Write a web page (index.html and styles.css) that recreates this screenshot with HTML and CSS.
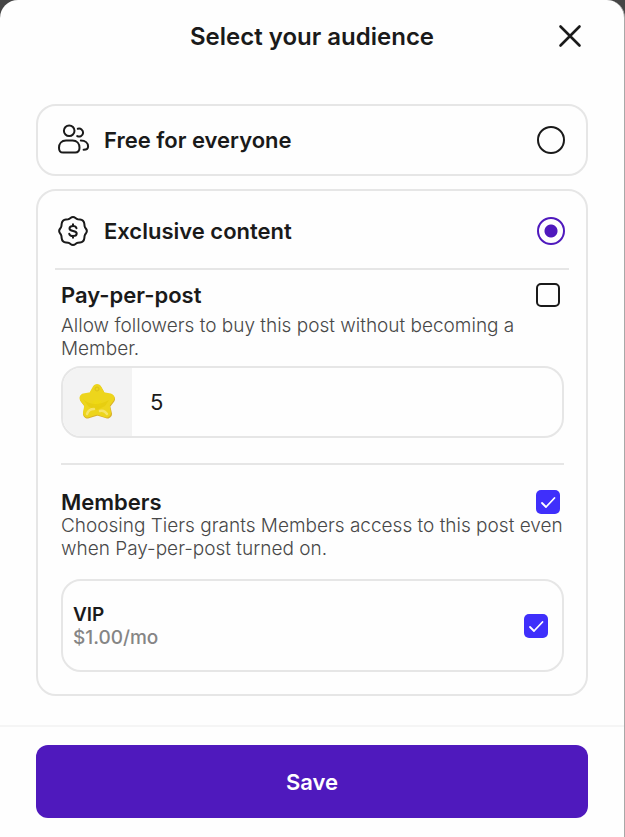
FILE: index.html
```html
<!DOCTYPE html>
<html lang="en">
<head>
    <meta charset="UTF-8">
    <meta name="viewport" content="width=device-width, initial-scale=1.0">
    <title>Select your audience</title>
    <link rel="stylesheet" href="styles.css">
</head>
<body>
    <form class="sheet">
        <header class="sheet-header">
            <h1>Select your audience</h1>
            <button type="button" class="close" aria-label="Close">
                <svg width="24" height="24" viewBox="0 0 24 24" fill="none" stroke="currentColor" stroke-width="2.6" stroke-linecap="round">
                    <path d="M2.5 2.5l19 19M21.5 2.5l-19 19"/>
                </svg>
            </button>
        </header>

        <main class="options">
            <div class="card">
                <label class="option">
                    <svg class="icon" width="32" height="32" viewBox="0 0 32 32" fill="none" stroke="currentColor" stroke-width="2" stroke-linecap="round">
                        <circle cx="11.2" cy="6.8" r="5.3"/>
                        <path d="M8 16.600h6.500c4.500 0 7 3 7 7.200 0 3.200-1.300 4.800-4.300 4.800h-12C2.200 28.600 1 27 1 23.800c0-4.200 2.500-7.200 7-7.200z"/>
                        <path d="M19.800 4.800a4 4 0 1 1-.6 7.300"/>
                        <path d="M22.800 16.500c4.500 0 7.300 2.500 7.300 6 0 2.200-1.300 3.200-4.500 3.200"/>
                    </svg>
                    <span class="option-name">Free for everyone</span>
                    <input type="radio" name="audience" value="free">
                </label>
            </div>

            <div class="card card-open">
                <label class="option">
                    <svg class="icon" width="32" height="32" viewBox="0 0 32 32" fill="none" stroke="currentColor" stroke-width="2" stroke-linecap="round" stroke-linejoin="round">
                        <path d="M10.100 4.300Q11.400 4.100 12.500 3.100Q15 1 17.500 3.100Q18.600 4.100 19.900 4.300L22 4.500Q25.800 4.900 26.300 8.700L26.600 11.100Q26.800 12.400 27.800 13.500Q29.900 16 27.800 18.500Q26.800 19.600 26.600 20.900L26.300 23.300Q25.800 27.100 22 27.500L19.900 27.700Q18.600 27.900 17.500 28.900Q15 31 12.500 28.900Q11.400 27.900 10.100 27.700L8 27.500Q4.200 27.100 3.700 23.300L3.400 20.900Q3.200 19.600 2.200 18.500Q.1 16 2.200 13.500Q3.200 12.400 3.400 11.100L3.700 8.700Q4.200 4.900 8 4.500z"/>
                        <path d="M18.500 13.200c-.4-1.500-1.700-2.200-3.500-2.200-2 0-3.500.9-3.500 2.500 0 3.400 7.200 1.700 7.200 5 0 1.700-1.600 2.500-3.700 2.500s-3.500-.8-3.800-2.300M15 9.300V11M15 21v1.800"/>
                    </svg>
                    <span class="option-name">Exclusive content</span>
                    <input type="radio" name="audience" value="exclusive" checked>
                </label>

                <section class="setting">
                    <div class="setting-head">
                        <label for="payPerPost">Pay-per-post</label>
                        <input type="checkbox" id="payPerPost">
                    </div>
                    <p class="hint spaced">Allow followers to buy this post without becoming a Member.</p>
                    <div class="price">
                        <label class="price-unit" for="price" aria-label="Price in stars">
                            <svg width="38" height="38" viewBox="0 0 38 38">
                                <defs>
                                    <linearGradient id="gold" x1="0" y1="0" x2="0" y2="1">
                                        <stop offset="0" stop-color="#e9d42a"/>
                                        <stop offset=".6" stop-color="#efd912"/>
                                        <stop offset="1" stop-color="#f0d54a"/>
                                    </linearGradient>
                                </defs>
                                <g stroke-width="9" stroke-linejoin="round">
                                    <path d="M18.500 6.500l4.500 8 8.500 1.500-5 6.500 2 8.500-10-3-10 3 2-8.500-5-6.500 8.500-1.500z" fill="#d9b02c" stroke="#d9b02c"/>
                                    <path d="M18 5.500l4.500 8 8.500 1.500-5 6.500 1.500 8.500-9.500-3-9.500 3 1.500-8.500-5-6.500 8.500-1.500z" fill="url(#gold)" stroke="#edd51c"/>
                                </g>
                                <path d="M4 16c6 6 16 7 26 1l-4 6-8 4-8-3z" fill="#e2c704" opacity=".5"/>
                                <path d="M8 31c1-3 4-5 7-5M21 28c3-1 5 0 7 3" fill="none" stroke="#f8e98a" stroke-width="2.5" stroke-linecap="round" opacity=".7"/>
                                <circle cx="18" cy="6" r="2" fill="none" stroke="#dcc01a"/>
                            </svg>
                        </label>
                        <input type="text" id="price" value="5" inputmode="numeric">
                    </div>
                </section>

                <section class="setting">
                    <div class="setting-head">
                        <label for="members">Members</label>
                        <input type="checkbox" id="members" checked>
                    </div>
                    <p class="hint">Choosing Tiers grants Members access to this post even when Pay-per-post turned on.</p>
                    <label class="tier">
                        <span class="tier-text">
                            <span class="tier-name">VIP</span>
                            <span class="tier-price">$1.00/mo</span>
                        </span>
                        <input type="checkbox" name="tier" value="vip" checked>
                    </label>
                </section>
            </div>
        </main>

        <footer class="sheet-footer">
            <button type="submit" class="save">Save</button>
        </footer>
    </form>
</body>
</html>
```

FILE: styles.css
```css
* {
    box-sizing: border-box;
}
body {
    margin: 0;
    background: #464646;
    color: #1a1a1a;
    font-family: Inter, "Liberation Sans", sans-serif;
}
h1, p {
    margin: 0;
}
.sheet {
    min-height: 100vh;
    background: #fefefe;
    border-right: 1px solid #a8a8a8;
    border-radius: 18px 18px 0 0;
}
.sheet-header {
    display: grid;
    grid-template-columns: 36px 1fr 36px;
    align-items: center;
    height: 72px;
    padding: 0 36px;
}
.sheet-header h1 {
    grid-column: 2;
    font-size: 24px;
    font-weight: 600;
    text-align: center;
}
.close {
    display: flex;
    justify-content: center;
    padding: 6px;
    border: none;
    background: none;
    color: inherit;
    cursor: pointer;
}
.options {
    display: flex;
    flex-direction: column;
    gap: 13px;
    padding: 32px 36px 29px;
}
.card {
    padding: 0 17px;
    border: 2px solid #e6e6e6;
    border-radius: 20px;
}
.card-open {
    padding-top: 3px;
    padding-bottom: 22px;
}
.option {
    display: flex;
    align-items: center;
    gap: 14px;
    height: 68px;
    padding: 0 4px 0 3px;
    cursor: pointer;
}
.card-open .option {
    height: 76px;
    border-bottom: 2px solid #e6e6e6;
}
.option-name {
    flex: 1;
    font-size: 22px;
    font-weight: 600;
}
input[type="radio"],
input[type="checkbox"] {
    appearance: none;
    flex: none;
    margin: 0;
    border: 2px solid #1a1a1a;
    cursor: pointer;
}
input[type="radio"] {
    width: 28px;
    height: 28px;
    border-radius: 50%;
}
input[type="radio"]:checked {
    border-color: #4f19bd;
    background: radial-gradient(circle, #4f19bd 6px, transparent 7px);
}
input[type="checkbox"] {
    width: 24px;
    height: 24px;
    border-radius: 5px;
}
input[type="checkbox"]:checked {
    border: none;
    background: #3f2ffb url("data:image/svg+xml,%3Csvg xmlns='http://www.w3.org/2000/svg' viewBox='0 0 24 24'%3E%3Cpath d='M6 13l4 4 8.500-9' fill='none' stroke='white' stroke-width='1.800' stroke-linecap='round' stroke-linejoin='round'/%3E%3C/svg%3E");
}
.setting {
    margin: 0 5px 0 6px;
    padding-top: 13px;
}
.setting + .setting {
    margin-top: 25px;
    padding-top: 25px;
    border-top: 2px solid #e6e6e6;
}
.setting-head {
    display: flex;
    align-items: center;
    justify-content: space-between;
    height: 24px;
    padding-right: 4px;
    font-size: 22px;
    font-weight: 600;
}
.hint {
    margin-right: -8px;
    color: #484848;
    font-size: 19px;
    font-weight: 300;
    line-height: 23px;
}
.spaced {
    margin-top: 7px;
}
.price {
    display: flex;
    height: 72px;
    margin-top: 6px;
    border: 2px solid #e6e6e6;
    border-radius: 20px;
    overflow: hidden;
}
.price-unit {
    display: flex;
    align-items: center;
    justify-content: center;
    width: 69px;
    background: #f3f3f3;
}
.price input {
    flex: 1;
    min-width: 0;
    padding: 0 18px;
    border: none;
    outline: none;
    background: none;
    color: inherit;
    font: 22px Inter, "Liberation Sans", sans-serif;
}
.tier {
    display: flex;
    align-items: center;
    justify-content: space-between;
    height: 93px;
    margin-top: 19px;
    padding: 0 14px 0 10px;
    border: 2px solid #e6e6e6;
    border-radius: 20px;
    cursor: pointer;
}
.tier-text {
    display: flex;
    flex-direction: column;
    font-size: 19px;
    line-height: 23px;
}
.tier-name {
    font-weight: 600;
}
.tier-price {
    color: #858585;
    font-weight: 500;
}
.sheet-footer {
    padding: 18px 36px 19px;
    border-top: 2px solid #f5f5f5;
}
.save {
    width: 100%;
    height: 73px;
    border: none;
    border-radius: 12px;
    background: #4f19bd;
    color: #fff;
    font: 600 22px Inter, "Liberation Sans", sans-serif;
    cursor: pointer;
}
```
